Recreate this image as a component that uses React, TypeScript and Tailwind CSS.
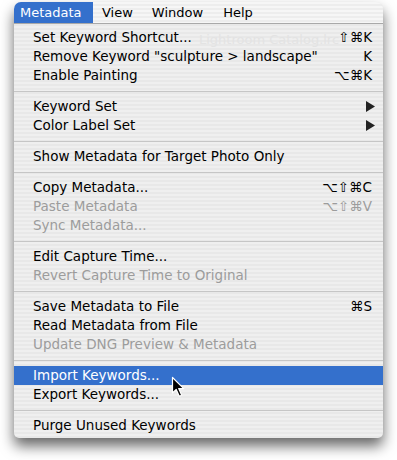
import React from "react";

type Item =
  | { kind: "sep" }
  | { kind: "row"; label: string; sc?: string; disabled?: boolean; sub?: boolean; hl?: boolean };

const items: Item[] = [
  { kind: "row", label: "Set Keyword Shortcut...", sc: "⇧⌘K" },
  { kind: "row", label: 'Remove Keyword "sculpture > landscape"', sc: "K" },
  { kind: "row", label: "Enable Painting", sc: "⌥⌘K" },
  { kind: "sep" },
  { kind: "row", label: "Keyword Set", sub: true },
  { kind: "row", label: "Color Label Set", sub: true },
  { kind: "sep" },
  { kind: "row", label: "Show Metadata for Target Photo Only" },
  { kind: "sep" },
  { kind: "row", label: "Copy Metadata...", sc: "⌥⇧⌘C" },
  { kind: "row", label: "Paste Metadata", sc: "⌥⇧⌘V", disabled: true },
  { kind: "row", label: "Sync Metadata...", disabled: true },
  { kind: "sep" },
  { kind: "row", label: "Edit Capture Time..." },
  { kind: "row", label: "Revert Capture Time to Original", disabled: true },
  { kind: "sep" },
  { kind: "row", label: "Save Metadata to File", sc: "⌘S" },
  { kind: "row", label: "Read Metadata from File" },
  { kind: "row", label: "Update DNG Preview & Metadata", disabled: true },
  { kind: "sep" },
  { kind: "row", label: "Import Keywords...", hl: true },
  { kind: "row", label: "Export Keywords..." },
  { kind: "sep" },
  { kind: "row", label: "Purge Unused Keywords" },
];

export default function App() {
  return (
    <div
      className="relative w-[397px] h-[460px] bg-white pt-[2px] pl-[14px] overflow-hidden"
      style={{ fontFamily: '"DejaVu Sans", "Liberation Sans", sans-serif' }}
    >
      <div className="relative w-[369px] rounded-t-[7px] rounded-b-[5px] overflow-hidden shadow-[0_8px_14px_rgba(0,0,0,0.6)] bg-[#ececec] bg-[repeating-linear-gradient(to_bottom,#efefef_0px,#efefef_2px,#e8e8e8_2px,#e8e8e8_4px)]">
        {/* menubar */}
        <div className="flex items-center h-[22px] border-b border-[#a9a9a9] bg-[repeating-linear-gradient(to_bottom,#f6f6f6_0px,#f6f6f6_2px,#ededed_2px,#ededed_4px)] text-[13px] text-black">
          <div className="h-full w-[79px] pl-[6px] flex items-center bg-[#3470cc] text-white">Metadata</div>
          <div className="ml-[9px]">View</div>
          <div className="ml-[19px]">Window</div>
          <div className="ml-[20px]">Help</div>
        </div>
        {/* ghost text bleeding through */}
        <div className="absolute left-[185px] top-[28px] text-[13px] text-[#e3e3e3] whitespace-nowrap">
          Lightroom Catalog.lrc
        </div>
        <div className="relative pt-[4px] pb-[3px] text-[13.5px]">
          {items.map((it, i) =>
            it.kind === "sep" ? (
              <div key={i} className="h-[12px] flex flex-col justify-center">
                <div className="h-px bg-[#c6c6c6]" />
              </div>
            ) : (
              <div
                key={i}
                className={
                  "h-[19px] pl-[19px] pr-[11px] flex items-center justify-between whitespace-nowrap " +
                  (it.hl ? "bg-[#3470cc] text-white" : it.disabled ? "text-[#9c9c9c]" : "text-black")
                }
              >
                <span>{it.label}</span>
                {it.sc && <span>{it.sc}</span>}
                {it.sub && (
                  <svg width="9" height="11" viewBox="0 0 9 11" className="mr-[-3px]">
                    <polygon points="0,0 9,5.5 0,11" fill="#222" />
                  </svg>
                )}
              </div>
            )
          )}
        </div>
      </div>
      {/* cursor */}
      <svg
        className="absolute left-[171px] top-[376px]"
        width="15"
        height="22"
        viewBox="0 0 15 22"
      >
        <path
          d="M1.5 1.5 L1.5 17 L5.2 13.5 L8.3 20.3 L10.7 19.2 L7.7 12.6 L12.8 12.6 Z"
          fill="#000"
          stroke="#fff"
          strokeWidth="1.2"
          strokeLinejoin="round"
        />
      </svg>
    </div>
  );
}
